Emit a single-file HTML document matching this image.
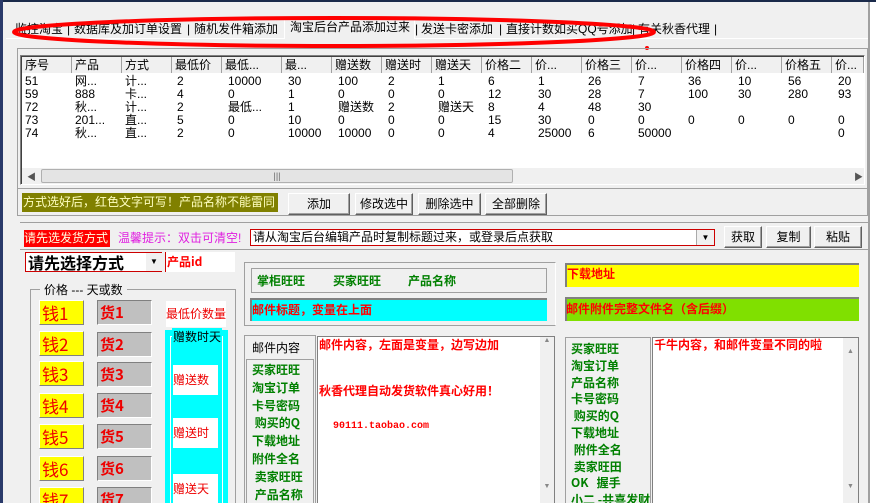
<!DOCTYPE html><html><head><meta charset="utf-8"><style>
*{margin:0;padding:0;box-sizing:border-box}
html,body{width:876px;height:503px;overflow:hidden}
body{background:#f0f0f0;position:relative;font:12px "Liberation Sans","Noto Sans CJK SC",sans-serif;color:#000}
div,span{position:absolute;white-space:nowrap}
.btn{background:#f0f0f0;border:1px solid;border-color:#fff #606060 #606060 #fff;box-shadow:inset -1px -1px 0 #a0a0a0;text-align:center;line-height:20px;font-size:12px}
.sunk{border:1px solid;border-color:#808080 #fff #fff #808080;box-shadow:inset 1px 1px 0 #404040}
.g{color:#008000;font-weight:bold;font-size:12px;font-family:"Noto Sans CJK SC",sans-serif}
.r{color:#f00;font-weight:bold;font-size:12px;font-family:"Noto Sans CJK SC",sans-serif}
.qian{background:#ffff00;color:#e00;font-size:17px;line-height:24px;padding-left:2px;border:1px solid;border-color:#fff #808080 #808080 #fff;font-family:"Noto Sans CJK SC",sans-serif}
.huo{background:#c0c0c0;color:#e00;font-size:15px;font-weight:bold;line-height:24px;padding-left:2px;border:1px solid;border-color:#808080 #fff #fff #808080;font-family:"Noto Sans CJK SC",sans-serif}
.hd span{top:0;height:16px;line-height:16px;font-size:12px;padding-left:3px;border-right:1px solid #a0a0a0;background:#f0f0f0}
.row span{font-size:12px;line-height:13px}
.t{top:21px;font-size:12px;line-height:16px}
</style></head><body>
<div style="left:0;top:0;width:876px;height:2px;background:#1a2a4a"></div>
<div style="left:0;top:0;width:3px;height:503px;background:#2a3a6a"></div>
<div style="left:868px;top:2px;width:2px;height:501px;background:#a0a0a0"></div>
<div style="left:870px;top:2px;width:6px;height:501px;background:#fff"></div>
<!-- tabs -->
<div style="left:6px;top:38px;width:862px;height:1px;background:#fff"></div>
<div class="t" style="left:15px">监控淘宝</div><div class="t" style="left:67px">|</div>
<div class="t" style="left:74px">数据库及加订单设置</div><div class="t" style="left:187px">|</div>
<div class="t" style="left:194px">随机发件箱添加</div>
<div style="left:284px;top:17px;width:131px;height:22px;background:#f0f0f0;border:1px solid #fff;border-bottom:none"></div>
<div class="t" style="left:290px;top:19px">淘宝后台产品添加过来</div><div class="t" style="left:415px">|</div>
<div class="t" style="left:421px">发送卡密添加</div><div class="t" style="left:499px">|</div>
<div class="t" style="left:506px">直接计数如买QQ号添加</div><div class="t" style="left:632px">|</div>
<div class="t" style="left:638px">有关秋香代理</div><div class="t" style="left:714px">|</div>
<svg style="position:absolute;left:0;top:0" width="876" height="60"><ellipse cx="334" cy="32" rx="320" ry="14" fill="none" stroke="#f00" stroke-width="4"/><circle cx="647" cy="48" r="2" fill="#f00"/></svg>
<!-- list -->
<div style="left:17px;top:48px;width:851px;height:141px;border:1px solid #a0a0a0"></div>
<div style="left:20px;top:55px;width:845px;height:130px;background:#fff" class="sunk"></div>
<div class="hd" style="left:22px;top:57px;width:842px;height:16px;background:#f0f0f0">
<span style="left:0;width:50px">序号</span><span style="left:50px;width:50px">产品</span><span style="left:100px;width:50px">方式</span><span style="left:150px;width:50px">最低价</span><span style="left:200px;width:60px">最低...</span><span style="left:260px;width:50px">最...</span><span style="left:310px;width:50px">赠送数</span><span style="left:360px;width:50px">赠送时</span><span style="left:410px;width:50px">赠送天</span><span style="left:460px;width:50px">价格二</span><span style="left:510px;width:50px">价...</span><span style="left:560px;width:50px">价格三</span><span style="left:610px;width:50px">价...</span><span style="left:660px;width:50px">价格四</span><span style="left:710px;width:50px">价...</span><span style="left:760px;width:50px">价格五</span><span style="left:810px;width:32px">价...</span></div>
<div class="row" style="left:25px;top:75px;width:840px;height:70px">
<span style="left:0;top:0">51</span><span style="left:50px;top:0">网...</span><span style="left:100px;top:0">计...</span><span style="left:152px;top:0">2</span><span style="left:203px;top:0">10000</span><span style="left:263px;top:0">30</span><span style="left:313px;top:0">100</span><span style="left:363px;top:0">2</span><span style="left:413px;top:0">1</span><span style="left:463px;top:0">6</span><span style="left:513px;top:0">1</span><span style="left:563px;top:0">26</span><span style="left:613px;top:0">7</span><span style="left:663px;top:0">36</span><span style="left:713px;top:0">10</span><span style="left:763px;top:0">56</span><span style="left:813px;top:0">20</span>
<span style="left:0;top:13px">59</span><span style="left:50px;top:13px">888</span><span style="left:100px;top:13px">卡...</span><span style="left:152px;top:13px">4</span><span style="left:203px;top:13px">0</span><span style="left:263px;top:13px">1</span><span style="left:313px;top:13px">0</span><span style="left:363px;top:13px">0</span><span style="left:413px;top:13px">0</span><span style="left:463px;top:13px">12</span><span style="left:513px;top:13px">30</span><span style="left:563px;top:13px">28</span><span style="left:613px;top:13px">7</span><span style="left:663px;top:13px">100</span><span style="left:713px;top:13px">30</span><span style="left:763px;top:13px">280</span><span style="left:813px;top:13px">93</span>
<span style="left:0;top:26px">72</span><span style="left:50px;top:26px">秋...</span><span style="left:100px;top:26px">计...</span><span style="left:152px;top:26px">2</span><span style="left:203px;top:26px">最低...</span><span style="left:263px;top:26px">1</span><span style="left:313px;top:26px">赠送数</span><span style="left:363px;top:26px">2</span><span style="left:413px;top:26px">赠送天</span><span style="left:463px;top:26px">8</span><span style="left:513px;top:26px">4</span><span style="left:563px;top:26px">48</span><span style="left:613px;top:26px">30</span>
<span style="left:0;top:39px">73</span><span style="left:50px;top:39px">201...</span><span style="left:100px;top:39px">直...</span><span style="left:152px;top:39px">5</span><span style="left:203px;top:39px">0</span><span style="left:263px;top:39px">10</span><span style="left:313px;top:39px">0</span><span style="left:363px;top:39px">0</span><span style="left:413px;top:39px">0</span><span style="left:463px;top:39px">15</span><span style="left:513px;top:39px">30</span><span style="left:563px;top:39px">0</span><span style="left:613px;top:39px">0</span><span style="left:663px;top:39px">0</span><span style="left:713px;top:39px">0</span><span style="left:763px;top:39px">0</span><span style="left:813px;top:39px">0</span>
<span style="left:0;top:52px">74</span><span style="left:50px;top:52px">秋...</span><span style="left:100px;top:52px">直...</span><span style="left:152px;top:52px">2</span><span style="left:203px;top:52px">0</span><span style="left:263px;top:52px">10000</span><span style="left:313px;top:52px">10000</span><span style="left:363px;top:52px">0</span><span style="left:413px;top:52px">0</span><span style="left:463px;top:52px">4</span><span style="left:513px;top:52px">25000</span><span style="left:563px;top:52px">6</span><span style="left:613px;top:52px">50000</span><span style="left:813px;top:52px">0</span></div>
<div style="left:22px;top:168px;width:842px;height:16px;background:#f0f0f0"></div>
<div style="left:27px;top:170px;font-size:9px;color:#555">◀</div>
<div style="left:41px;top:169px;width:472px;height:14px;background:#e4e4e4;border:1px solid #b0b0b0;border-radius:2px;text-align:center;font-size:9px;line-height:12px;color:#666">|||</div>
<div style="left:854px;top:170px;font-size:9px;color:#555">▶</div>
<!-- button row -->
<div style="left:17px;top:189px;width:851px;height:27px;border:1px solid #a0a0a0;border-top:none"></div>
<div style="left:22px;top:193px;width:256px;height:19px;background:#808000;color:#ffffc0;font-size:12px;line-height:19px;padding-left:1px;overflow:hidden">方式选好后，红色文字可写！产品名称不能雷同</div>
<div class="btn" style="left:288px;top:193px;width:62px;height:22px">添加</div>
<div class="btn" style="left:355px;top:193px;width:58px;height:22px">修改选中</div>
<div class="btn" style="left:418px;top:193px;width:63px;height:22px">删除选中</div>
<div class="btn" style="left:485px;top:193px;width:62px;height:22px">全部删除</div>
<!-- second group -->
<div style="left:20px;top:222px;width:848px;height:1px;background:#a0a0a0"></div>
<div style="left:24px;top:230px;width:86px;height:17px;background:#f00;color:#ffffe0;font-size:12px;line-height:17px;overflow:hidden">请先选发货方式</div>
<div style="left:118px;top:230px;color:#e020e0;font-size:12px;line-height:17px">温馨提示：双击可清空!</div>
<div style="left:250px;top:229px;width:465px;height:17px;background:#fff;border:1px solid #c00;font-size:12px;line-height:15px;padding-left:2px">请从淘宝后台编辑产品时复制标题过来，或登录后点获取</div>
<div style="left:696px;top:230px;width:18px;height:15px;background:#f0f0f0;border-left:1px solid #aaa;font-size:8px;text-align:center;line-height:15px">▼</div>
<div class="btn" style="left:724px;top:226px;width:38px;height:22px">获取</div>
<div class="btn" style="left:766px;top:226px;width:45px;height:22px">复制</div>
<div class="btn" style="left:814px;top:226px;width:48px;height:22px">粘贴</div>
<div style="left:20px;top:249px;width:848px;height:1px;background:#a0a0a0"></div>
<div style="left:25px;top:252px;width:137px;height:20px;background:#fff;border:1px solid #c00;font-size:16px;font-weight:bold;line-height:18px;padding-left:2px;font-family:'Noto Sans CJK SC',sans-serif">请先选择方式</div>
<div style="left:146px;top:253px;width:16px;height:18px;background:#f0f0f0;font-size:8px;text-align:center;line-height:18px">▼</div>
<div style="left:165px;top:252px;width:70px;height:20px;background:#fff;border-left:1px solid #c00" class="r"><span style="left:1px;top:1px">产品id</span></div>
<!-- price group -->
<div style="left:30px;top:289px;width:206px;height:214px;border:1px solid #a0a0a0;border-bottom:none"></div>
<div style="left:40px;top:281px;background:#f0f0f0;padding:0 4px;font-size:12px">价格 --- 天或数</div>
<div class="qian" style="left:39px;top:300px;width:45px;height:25px">钱1</div><div class="huo" style="left:97px;top:300px;width:55px;height:25px">货1</div>
<div class="qian" style="left:39px;top:331px;width:45px;height:25px">钱2</div><div class="huo" style="left:97px;top:332px;width:55px;height:25px">货2</div>
<div class="qian" style="left:39px;top:361px;width:45px;height:25px">钱3</div><div class="huo" style="left:97px;top:362px;width:55px;height:25px">货3</div>
<div class="qian" style="left:39px;top:393px;width:45px;height:25px">钱4</div><div class="huo" style="left:97px;top:393px;width:55px;height:25px">货4</div>
<div class="qian" style="left:39px;top:424px;width:45px;height:25px">钱5</div><div class="huo" style="left:97px;top:424px;width:55px;height:25px">货5</div>
<div class="qian" style="left:39px;top:456px;width:45px;height:25px">钱6</div><div class="huo" style="left:97px;top:456px;width:55px;height:25px">货6</div>
<div class="qian" style="left:39px;top:487px;width:45px;height:25px">钱7</div><div class="huo" style="left:97px;top:487px;width:55px;height:25px">货7</div>
<div style="left:166px;top:301px;width:60px;height:26px;background:#fff;color:#e00;font-size:12px;line-height:26px;overflow:hidden">最低价数量</div>
<div style="left:165px;top:330px;width:63px;height:173px;background:#00ffff"></div>
<div style="left:170px;top:336px;width:53px;height:167px;border:1px solid #fff;border-bottom:none"></div>
<div style="left:172px;top:328px;background:#00ffff;font-size:12px;padding:0 1px">赠数时天</div>
<div style="left:173px;top:365px;width:45px;height:30px;background:#fff;color:#e00;font-size:12px;line-height:30px">赠送数</div>
<div style="left:173px;top:418px;width:45px;height:30px;background:#fff;color:#e00;font-size:12px;line-height:30px">赠送时</div>
<div style="left:173px;top:474px;width:45px;height:30px;background:#fff;color:#e00;font-size:12px;line-height:30px">赠送天</div>
<!-- middle -->
<div style="left:244px;top:262px;width:312px;height:64px;border:1px solid #a0a0a0;border-right:1px solid #fff"></div>
<div style="left:251px;top:268px;width:296px;height:25px;border:1px solid #a0a0a0"></div>
<div class="g" style="left:257px;top:272px">掌柜旺旺</div><div class="g" style="left:333px;top:272px">买家旺旺</div><div class="g" style="left:408px;top:272px">产品名称</div>
<div style="left:250px;top:298px;width:297px;height:23px;background:#00ffff;border-top:2px solid #808080;border-left:2px solid #808080"></div>
<div class="r" style="left:252px;top:301px">邮件标题，变量在上面</div>
<div style="left:244px;top:335px;width:72px;height:168px;border:1px solid #a0a0a0;border-bottom:none"></div>
<div style="left:252px;top:339px;font-size:12px">邮件内容</div>
<div style="left:246px;top:359px;width:68px;height:144px;border:1px solid #a0a0a0;border-bottom:none"></div>
<div class="g" style="left:252px;top:361px;line-height:17.8px">买家旺旺<br>淘宝订单<br>卡号密码<br>&nbsp;购买的Q<br>下载地址<br>附件全名<br>&nbsp;卖家旺旺<br>&nbsp;产品名称</div>
<div style="left:317px;top:336px;width:238px;height:167px;background:#fff;border:1px solid #808080;border-bottom:none"></div>
<div style="left:540px;top:337px;width:14px;height:166px;background:#f0f0f0;font-size:7px;color:#888;text-align:center">▲</div>
<div style="left:540px;top:483px;width:14px;font-size:7px;color:#888;text-align:center">▼</div>
<div class="r" style="left:319px;top:336px">邮件内容，左面是变量，边写边加</div>
<div class="r" style="left:319px;top:382px">秋香代理自动发货软件真心好用！</div>
<div class="r" style="left:333px;top:421px;font-size:10px;font-family:'Liberation Mono',monospace">90111.taobao.com</div>
<!-- right -->
<div style="left:565px;top:263px;width:294px;height:24px;background:#ffff00;border-top:2px solid #808080;border-left:2px solid #808080"></div>
<div class="r" style="left:567px;top:265px">下载地址</div>
<div style="left:565px;top:297px;width:294px;height:24px;background:#80e000;border-top:2px solid #808080;border-left:2px solid #808080"></div>
<div class="r" style="left:566px;top:300px">邮件附件完整文件名（含后缀）</div>
<div style="left:565px;top:337px;width:86px;height:166px;border:1px solid #a0a0a0;border-bottom:none"></div>
<div class="g" style="left:571px;top:341px;line-height:16.8px">买家旺旺<br>淘宝订单<br>产品名称<br>卡号密码<br>&nbsp;购买的Q<br>下载地址<br>&nbsp;附件全名<br>&nbsp;卖家旺田<br>OK&nbsp;&nbsp;&nbsp;握手<br>小二 -共喜发财</div>
<div style="left:652px;top:337px;width:207px;height:166px;background:#fff;border:1px solid #808080;border-bottom:none"></div>
<div style="left:843px;top:338px;width:15px;height:165px;background:#f0f0f0;font-size:7px;color:#888;text-align:center;line-height:28px">▲</div>
<div style="left:843px;top:483px;width:15px;font-size:7px;color:#888;text-align:center">▼</div>
<div class="r" style="left:654px;top:336px">千牛内容，和邮件变量不同的啦</div>
</body></html>
